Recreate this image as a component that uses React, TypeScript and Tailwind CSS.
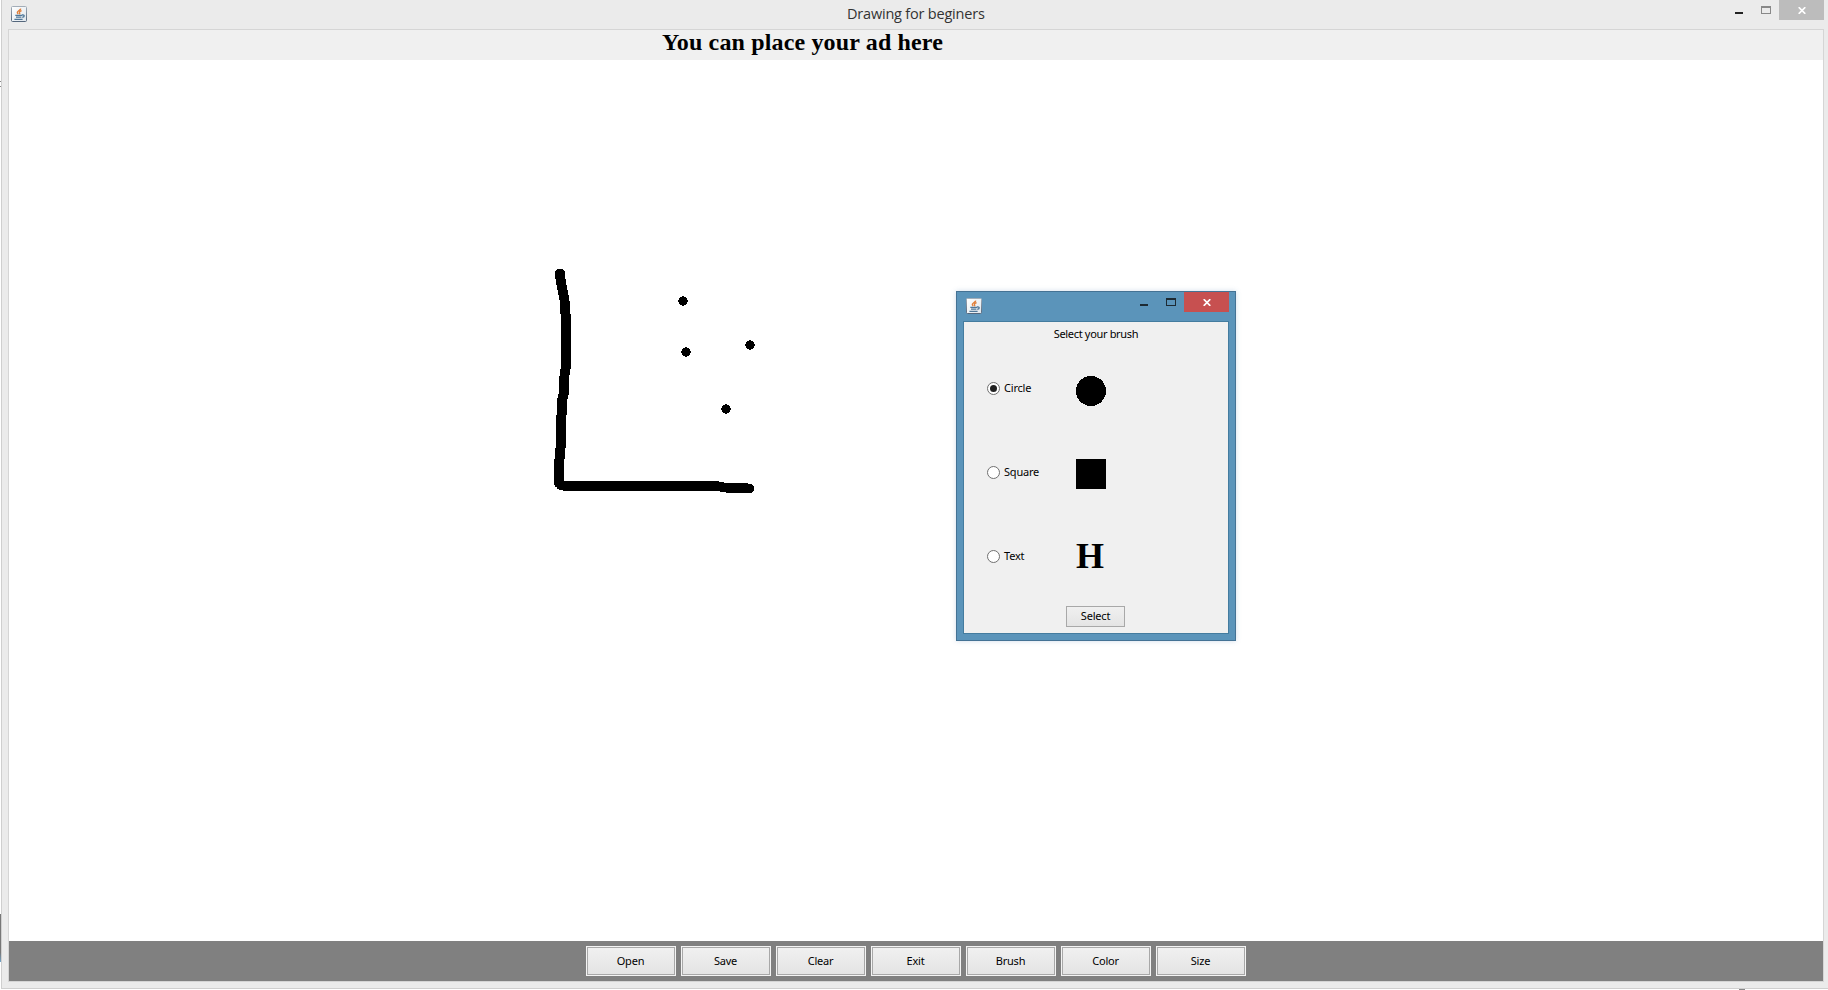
import React from "react";

const STROKE: [number, number][] = [
  [560, 273.5], [560, 276], [562, 288], [564, 297], [565, 304], [565, 312], [566, 316],
  [566, 367], [565, 371], [564, 380], [564, 393], [562, 400], [562, 413], [561, 418], [561, 446],
  [560, 450], [560, 456], [559, 462], [559, 483], [561, 485], [565, 486],
];
const BASE_LEFT: [number, number][] = [[565, 486], [717, 486]];
const BASE_RIGHT: [number, number][] = [
  [717, 486], [722, 487], [728, 488], [746, 488], [749.5, 488.5],
];
const DOTS: [number, number][] = [[683, 301], [686, 352], [750, 345], [726, 409]];

function dabs(points: [number, number][], step: number) {
  const out: [number, number][] = [];
  for (let i = 1; i < points.length; i++) {
    const [x0, y0] = points[i - 1];
    const [x1, y1] = points[i];
    const n = Math.max(1, Math.round(Math.hypot(x1 - x0, y1 - y0) / step));
    for (let k = 0; k <= n; k++) out.push([x0 + ((x1 - x0) * k) / n, y0 + ((y1 - y0) * k) / n]);
  }
  return out;
}

function JavaIcon() {
  return (
    <svg width="16" height="16" viewBox="0 0 16 16" className="block shrink-0">
      <defs>
        <linearGradient id="cup" x1="0" y1="0" x2="1" y2="1">
          <stop offset="0" stopColor="#ffffff" />
          <stop offset="1" stopColor="#dfe6ec" />
        </linearGradient>
        <linearGradient id="edge" x1="0" y1="0" x2="0" y2="1">
          <stop offset="0" stopColor="#a3adb8" />
          <stop offset="1" stopColor="#55677c" />
        </linearGradient>
      </defs>
      <rect x="0.5" y="0.5" width="15" height="15" rx="1" fill="url(#cup)" stroke="url(#edge)" />
      <path d="M9.8 2.6C9.6 4.4 6 4.8 6.3 6.6c.1.6.6 1 .9 1.5M10.6 4.6C8.6 5.5 8 6.2 8.6 7c.3.5.2.9-.2 1.3" fill="none" stroke="#e0803c" strokeWidth="1.4" />
      <path d="M4.3 9.4h6.8M5 11.2h5.4M3.4 13.3h8.2M11 9c2.8-.6 3 1.7.3 2.4" fill="none" stroke="#4f7798" strokeWidth="1.3" />
    </svg>
  );
}

function CloseGlyph() {
  return (
    <svg width="8" height="7" viewBox="0 0 8 7" className="block">
      <path d="M.7 .2L7.3 6.8M7.3 .2L.7 6.8" stroke="#fff" strokeWidth="1.7" />
    </svg>
  );
}

function ToolButton({ label }: { label: string }) {
  return (
    <button className="h-[30px] w-[90px] border border-[#f4f4f4] bg-[#f4f4f4]">
      <span className="flex h-full w-full items-center justify-center border border-[#a8a8a8] bg-linear-to-b from-[#f0f0f0] to-[#e4e4e4] pr-px">
        {label}
      </span>
    </button>
  );
}

function BrushOption({ label, checked, children }: { label: string; checked?: boolean; children: React.ReactNode }) {
  return (
    <div className="flex h-[84px] items-center">
      <div className="flex w-[89px] items-center gap-1">
        <span className="flex size-[13px] shrink-0 items-center justify-center rounded-full border border-[#707070] bg-white">
          {checked && <span className="size-[7px] rounded-full bg-[#212121]" />}
        </span>
        <span className="leading-[14px]">{label}</span>
      </div>
      {children}
    </div>
  );
}

function BrushDialog() {
  return (
    <div className="absolute left-[956px] top-[291px] flex h-[350px] w-[280px] flex-col border border-[#447294] bg-[#5b94ba] px-1.5 pb-1.5 shadow-[0_0_5px_rgba(70,120,170,0.25)]">
      <div className="flex h-[29px] shrink-0 items-start">
        <div className="pl-[3px] pt-1.5">
          <JavaIcon />
        </div>
        <div className="ml-auto flex">
          <div className="mt-3 mr-[18px] h-0.5 w-2 bg-[#1d2a33]" />
          <div className="mt-1.5 mr-2 h-2 w-2.5 border border-t-2 border-[#1d2a33]" />
          <div className="flex h-5 w-[45px] items-center justify-center bg-[#c75050]">
            <CloseGlyph />
          </div>
        </div>
      </div>
      <div className="flex min-h-0 flex-1 flex-col border border-[#447c9f] bg-[#f0f0f0]">
        <div className="h-[24px] shrink-0 pt-[5px] text-center leading-[14px] tracking-[-0.33px]">Select your brush</div>
        <div className="flex flex-col pl-[23px]">
          <BrushOption label="Circle" checked>
            <svg width="30" height="30" className="mt-[5px]" shapeRendering="crispEdges">
              <circle cx="15" cy="15" r="15" />
            </svg>
          </BrushOption>
          <BrushOption label="Square">
            <div className="mt-[3px] size-[30px] bg-black" />
          </BrushOption>
          <BrushOption label="Text">
            <span className="font-['Liberation_Serif',serif] text-[36px] font-bold leading-9 tracking-normal">H</span>
          </BrushOption>
        </div>
        <button className="ml-[102px] mt-[8px] flex h-[21px] w-[59px] items-center justify-center border border-[#a8a8a8] bg-linear-to-b from-[#f0f0f0] to-[#e4e4e4] pb-px">
          Select
        </button>
      </div>
    </div>
  );
}

export default function App() {
  return (
    <div className="relative flex h-[990px] w-[1828px] flex-col overflow-hidden bg-white font-['Noto_Sans',sans-serif] text-[11px] tracking-[-0.2px] text-black">
      <div className="ml-px flex h-[989px] flex-col border-b border-l border-[#cfcfcf] bg-[#ebebeb] pl-1.5 pr-[4px]">
        <div className="flex h-[29px] shrink-0 items-start">
          <div className="w-[200px] pl-[3px] pt-1.5">
            <JavaIcon />
          </div>
          <div className="flex-1 pl-[639px] pt-1 font-['Open_Sans',sans-serif] text-[14.5px] leading-5 text-[#333]">Drawing for beginers</div>
          <div className="mt-3 mr-[18px] h-0.5 w-2 bg-[#222]" />
          <div className="mt-1.5 mr-2 h-2 w-2.5 border border-t-2 border-[#888]" />
          <div className="flex h-5 w-[45px] items-center justify-center bg-[#bcbcbc]">
            <CloseGlyph />
          </div>
        </div>
        <div className="flex flex-1 flex-col border border-[#d5d5d5] bg-white">
          <div className="h-[30px] shrink-0 bg-[#f0f0f0] pl-[653px] font-['Liberation_Serif',serif] text-[24px] font-bold leading-6 tracking-[0.15px]">
            You can place your ad here
          </div>
          <div className="flex-1" />
          <div className="flex h-10 shrink-0 items-center justify-center gap-[5px] bg-[#808080]">
            {["Open", "Save", "Clear", "Exit", "Brush", "Color", "Size"].map((l) => (
              <ToolButton key={l} label={l} />
            ))}
          </div>
        </div>
        <div className="h-1.5 shrink-0" />
      </div>
      <div className="absolute left-0 top-[914px] h-[48px] w-px bg-linear-to-b from-[#777] from-80% to-[#6fa3c8]" />
      <div className="absolute left-0 top-[81px] h-[6px] w-px border-y border-[#888]" />
      <div className="absolute left-[1739px] top-[989px] h-px w-[6px] bg-[#888]" />
      <svg className="absolute left-0 top-0" width="900" height="600" shapeRendering="crispEdges">
        {dabs(STROKE, 1).map(([x, y], i) => <circle key={i} cx={x} cy={y} r="5" />)}
        {dabs(BASE_LEFT, 4).map(([x, y], i) => <circle key={i} cx={x} cy={y} r="4.9" />)}
        {dabs(BASE_RIGHT, 1).map(([x, y], i) => <circle key={i} cx={x} cy={y} r="4.8" />)}
        {DOTS.map(([x, y], i) => <circle key={i} cx={x} cy={y} r="4.7" />)}
      </svg>
      <BrushDialog />
    </div>
  );
}
